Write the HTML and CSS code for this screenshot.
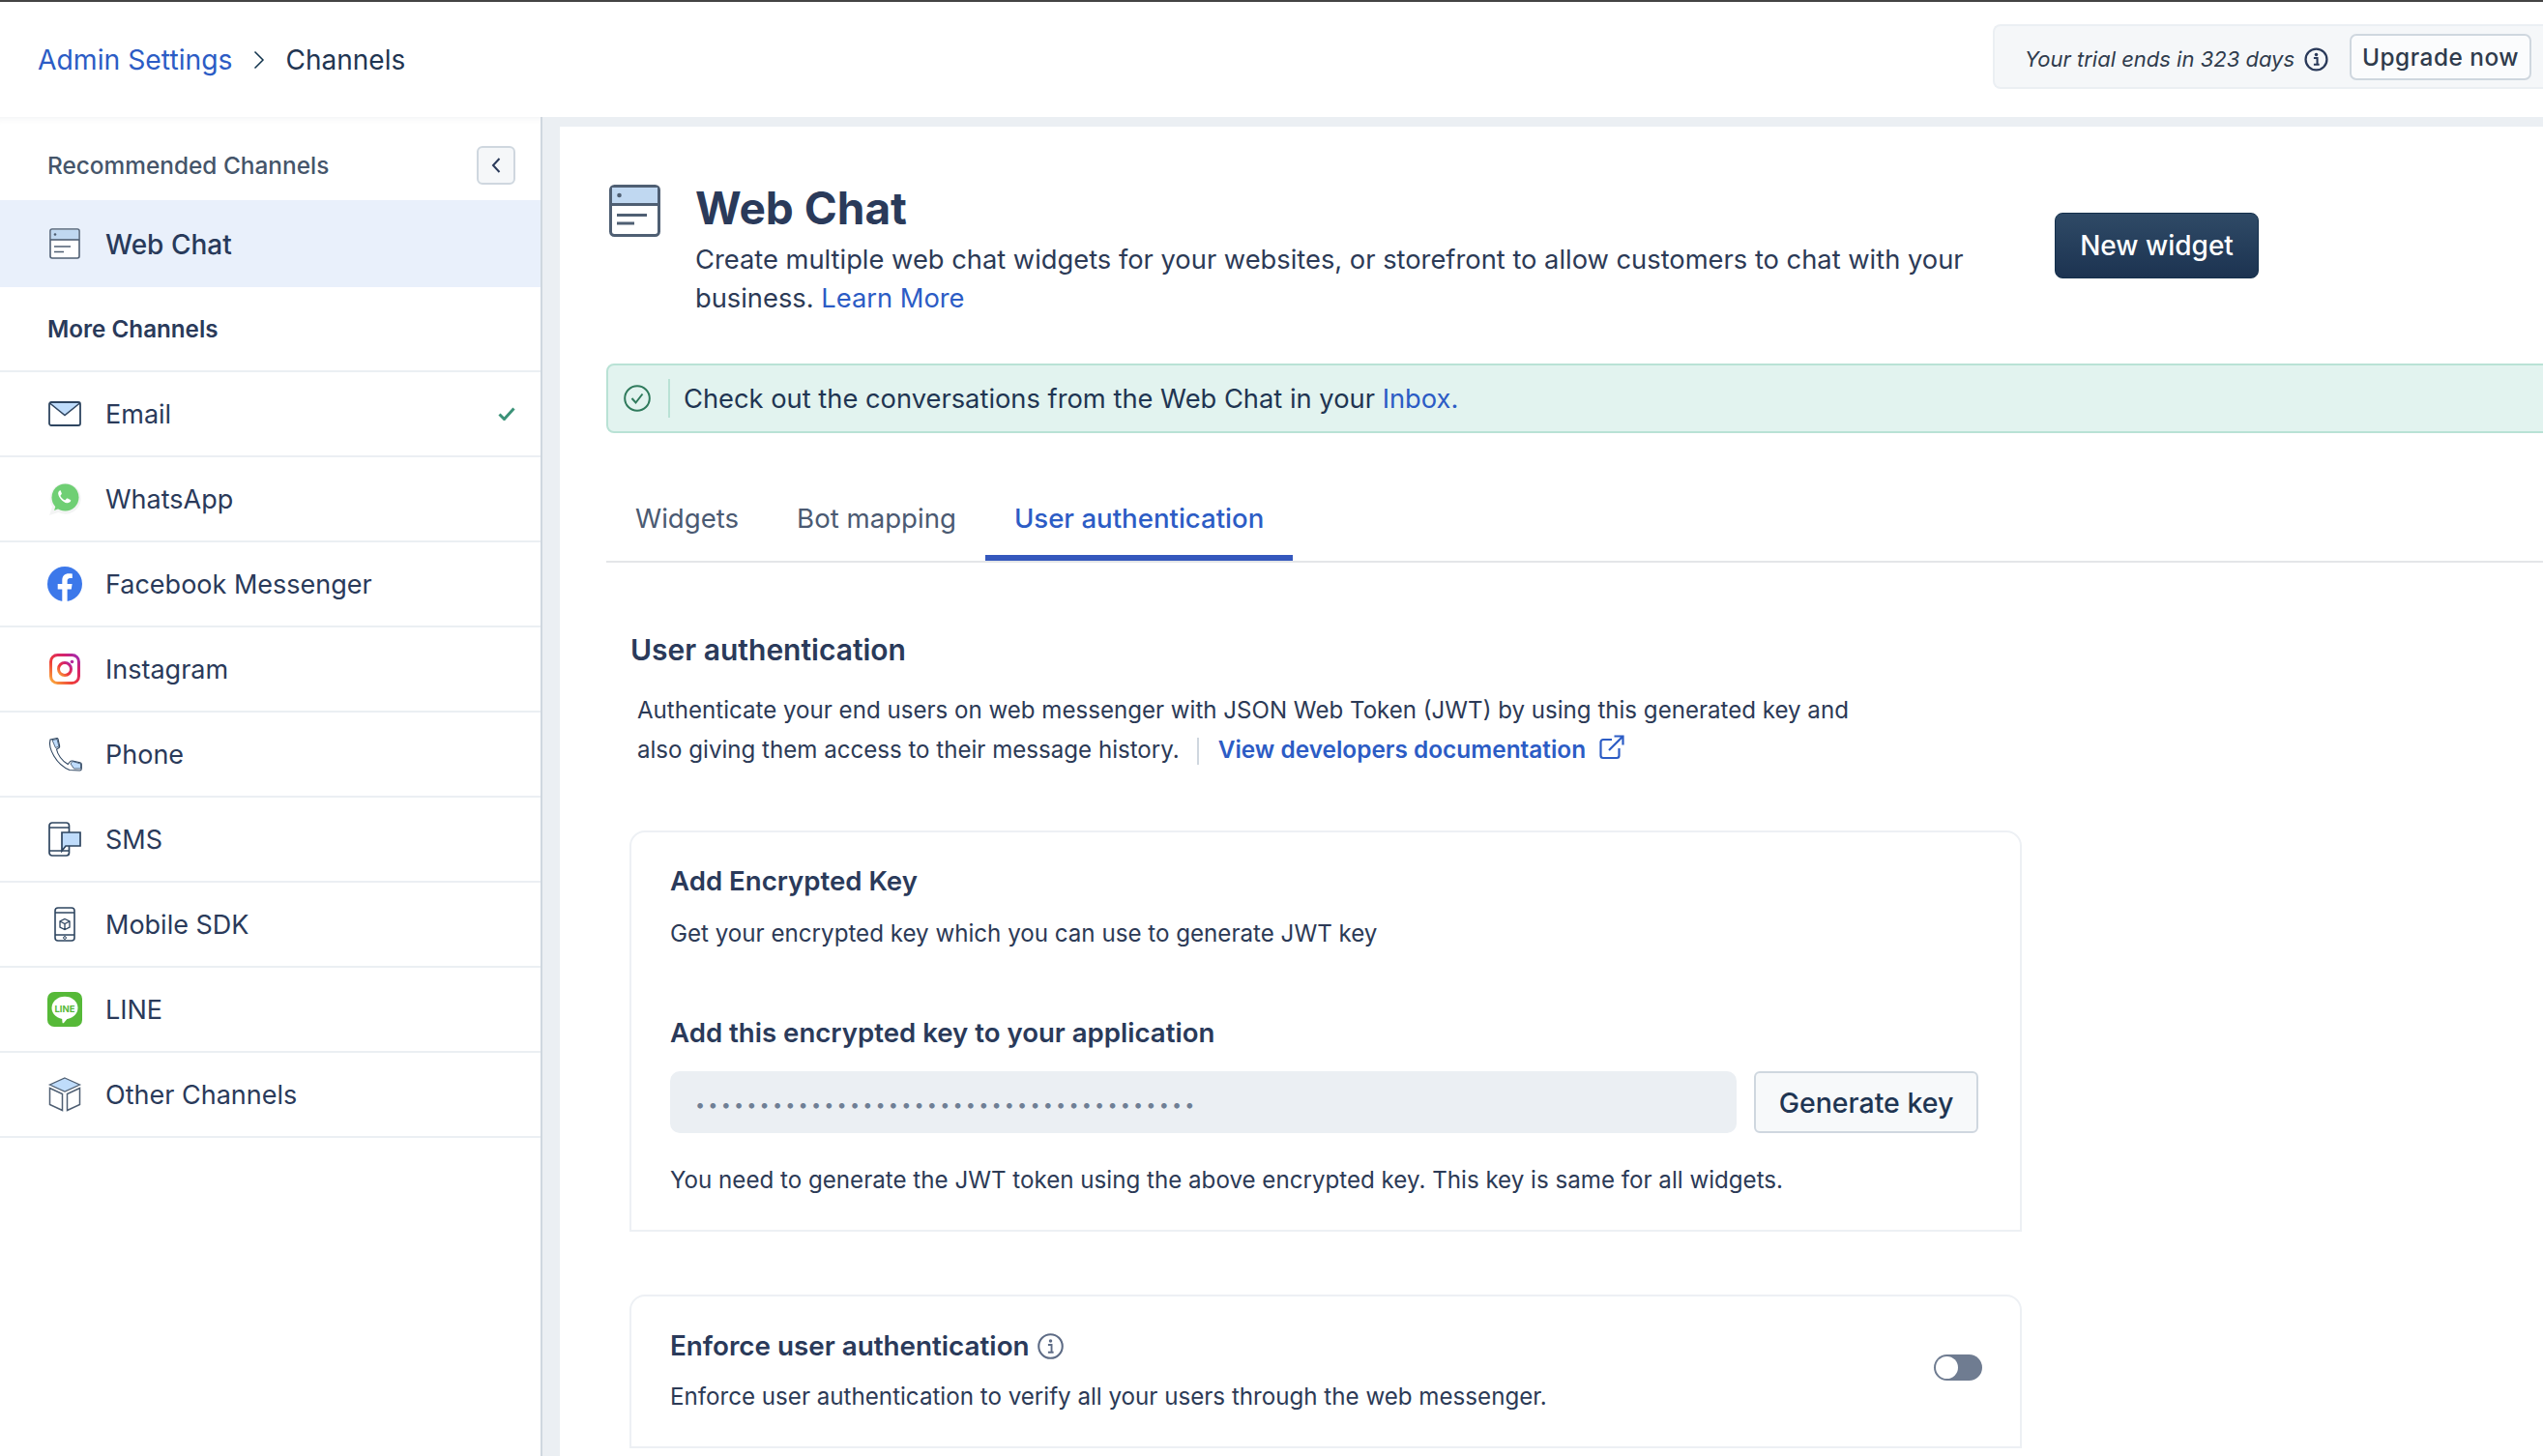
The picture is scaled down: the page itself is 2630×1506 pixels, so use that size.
FILE: index.html
```html
<!DOCTYPE html>
<html lang="en">
<head>
<meta charset="utf-8">
<title>Channels</title>
<link rel="stylesheet" href="styles.css">
</head>
<body>
<svg class="defs" width="0" height="0">
  <defs>
    <linearGradient id="ig" x1="0" y1="1" x2="1" y2="0">
      <stop offset="0" stop-color="#fbb03b"/><stop offset=".4" stop-color="#ee3a3a"/><stop offset=".75" stop-color="#d3226f"/><stop offset="1" stop-color="#9a2bb8"/>
    </linearGradient>
  </defs>
</svg>
<header class="topbar">
  <nav class="crumbs">
    <a class="link">Admin Settings</a>
    <svg class="crumb-sep" viewBox="0 0 12 20"><path d="M1.5 1.5 10 10l-8.500 8.500" fill="none" stroke="#12344d" stroke-width="1.500"/></svg>
    <span class="crumb-current">Channels</span>
  </nav>
  <div class="trial">
    <em class="trial-text">Your trial ends in 323 days</em>
    <svg class="trial-info" viewBox="0 0 24 24"><circle cx="12" cy="12" r="10.500" fill="none" stroke="#2a3a5a" stroke-width="2.200"/><circle cx="12" cy="7.200" r="1.700" fill="#2a3a5a"/><path d="M9.500 10.500H13v6.500h2M9.500 17H15" fill="none" stroke="#2a3a5a" stroke-width="2"/></svg>
    <button class="upgrade">Upgrade now</button>
  </div>
</header>
<div class="body">
  <aside class="sidebar">
    <div class="side-head">
      <span class="side-rec">Recommended Channels</span>
      <button class="collapse"><svg viewBox="0 0 12 18" class="collapse-icon"><path d="M9.500 2 3 9l6.500 7" fill="none" stroke="#2a3a5a" stroke-width="2"/></svg></button>
    </div>
    <div class="row-active">
      <svg class="ic" viewBox="0 0 32 32"><rect x="1" y="1" width="30" height="30" rx="2" fill="#fff" stroke="#4f5f73" stroke-width="1.600"/><path d="M1.800 1.800h28.400v10.200H1.800z" fill="#c0d8f1"/><path d="M1 12h30" stroke="#4f5f73" stroke-width="1.600"/><circle cx="6" cy="6.500" r="1.300" fill="#4f5f73"/><path d="M5 19h17M5 24.500h10" stroke="#4f5f73" stroke-width="1.600"/></svg>
      <span class="active-label">Web Chat</span>
    </div>
    <div class="side-more">More Channels</div>
    <ul class="channels">
      <li class="row">
        <svg class="ic ic-mail" viewBox="0 0 34 26"><path d="M2 2h30L17 14z" fill="#bfdcfb"/><rect x="1" y="1" width="32" height="24" rx="2" fill="none" stroke="#2e4560" stroke-width="1.800"/><path d="M1.500 2 17 14.500 32.500 2" fill="none" stroke="#2e4560" stroke-width="1.600"/></svg>
        <span class="row-label">Email</span>
        <svg class="tick" viewBox="0 0 18 14"><path d="M1.500 7.500 6.500 12.500 16.500 1.500" fill="none" stroke="#3b9278" stroke-width="3"/></svg>
      </li>
      <li class="row">
        <svg class="ic" viewBox="0 0 34 36"><path d="M1 35l3-9A16 16 0 1 1 10.500 32z" fill="#f3f4f4"/><circle cx="17.500" cy="16.500" r="14" fill="#6fcf74"/><path d="M6 30l2.500-7 5 4z" fill="#6fcf74"/><path d="M12.500 9c-1.500.5-2.500 2-2.300 3.700.4 3.600 4.800 8.900 9 9.600 1.900.3 3.400-.7 4-2.200.2-.6 0-1-.4-1.200l-2.900-1.400c-.5-.2-.8-.1-1.100.3l-1 1.200c-.3.300-.6.300-1 .2-1.800-.8-3.300-2.300-4.200-4-.2-.4-.1-.7.200-1l.8-1c.3-.3.300-.6.200-1l-1.200-2.900c-.2-.4-.5-.5-1-.3z" fill="#fff"/></svg>
        <span class="row-label">WhatsApp</span>
      </li>
      <li class="row">
        <svg class="ic" viewBox="0 0 36 36"><circle cx="18" cy="18" r="18" fill="#3c78ea"/><path d="M15.300 36V23.500h-4.600V18h4.600v-3.700c0-4.600 2.700-7.100 6.900-7.100 1.300 0 2.700.2 3.600.4v4.500h-2.300c-2.200 0-2.900 1.400-2.900 2.800V18h5l-.8 5.500h-4.200V36z" fill="#fff"/></svg>
        <span class="row-label">Facebook Messenger</span>
      </li>
      <li class="row">
        <svg class="ic" viewBox="-2 -2 36 36"><rect x="1.500" y="1.500" width="29" height="29" rx="7" fill="none" stroke="url(#ig)" stroke-width="3"/><circle cx="16" cy="16" r="6.500" fill="none" stroke="url(#ig)" stroke-width="3"/><circle cx="23.500" cy="8.500" r="1.800" fill="#b5289c"/></svg>
        <span class="row-label">Instagram</span>
      </li>
      <li class="row">
        <svg class="ic" viewBox="0 0 36 36"><path d="M10 1.500 3 3C.500 12 9 29 23 34.500l10.500.5c1.500 0 1.800-1 1.800-2v-4.500c0-1-.5-1.500-1.500-1.800L26 25c-1.500-.3-2 0-2.800 1l-2 2.500C15 25 10.500 18.500 9.500 13l2.500-1.500c.8-.5.800-1.200.6-2.200L11 2.500c-.1-.6-.5-1-1-1z" fill="#fff" stroke="#2e4560" stroke-width="1.100"/><path d="M5 3.500 10 2.500 12 10 8.500 11.500zM24 28l2-2.500 8.500 2.500v5l-7 0z" fill="#bfdcfb" stroke="#2e4560" stroke-width=".8"/></svg>
        <span class="row-label">Phone</span>
      </li>
      <li class="row">
        <svg class="ic" viewBox="0 0 34 36"><rect x="1" y="1" width="20.500" height="34" rx="3" fill="#fff" stroke="#2e4560" stroke-width="1.700"/><path d="M1 6h20.500M1 30h20.500" stroke="#2e4560" stroke-width="1.400"/><path d="M14 11h19v14H18l-4 5z" fill="#bfdcfb" stroke="#2e4560" stroke-width="1.700"/></svg>
        <span class="row-label">SMS</span>
      </li>
      <li class="row">
        <svg class="ic" viewBox="0 0 32 36"><rect x="6" y="1" width="20" height="34" rx="3" fill="#fff" stroke="#2e4560" stroke-width="1.600"/><path d="M6 6h20M6 29h20" stroke="#2e4560" stroke-width="1.400"/><path d="M16 12.500l5 2.500v6l-5 2.500-5-2.500v-6zM11 15l5 2.500 5-2.500M16 17.500v6" fill="#fff" stroke="#2e4560" stroke-width="1.300"/><circle cx="16" cy="32" r="1.400" fill="none" stroke="#2e4560" stroke-width="1"/></svg>
        <span class="row-label">Mobile SDK</span>
      </li>
      <li class="row">
        <svg class="ic" viewBox="0 0 36 36"><rect width="36" height="36" rx="7" fill="#56b938"/><ellipse cx="18" cy="16.500" rx="13.500" ry="11.800" fill="#fff"/><path d="M15 26h7l-5 6c-.5.500-1.500.500-1.500-.5z" fill="#fff"/><text x="18" y="20.500" text-anchor="middle" class="line-word">LINE</text></svg>
        <span class="row-label">LINE</span>
      </li>
      <li class="row">
        <svg class="ic" viewBox="0 0 34 36"><path d="M17 1 32.500 8 17 15 1.500 8z" fill="#bfdcfb" stroke="#4f5f73" stroke-width="1.300"/><path d="M1.500 11.500 14.500 17.500V34.500L1.500 28.500zM32.500 11.500 19.500 17.500V34.500L32.500 28.500z" fill="#fff" stroke="#4f5f73" stroke-width="1.500"/></svg>
        <span class="row-label">Other Channels</span>
      </li>
    </ul>
  </aside>
  <main class="content">
    <section class="panel">
      <div class="page-head">
        <svg class="head-icon" viewBox="0 0 53 54"><rect x="1.500" y="1.500" width="50" height="51" rx="4" fill="#fff" stroke="#4f5f73" stroke-width="3"/><path d="M3 3h47v17H3z" fill="#c0d8f1"/><path d="M2 20.500h49" stroke="#4f5f73" stroke-width="3"/><circle cx="10.500" cy="11" r="2.300" fill="#4f5f73"/><path d="M8 31.500h31M8 40h18" stroke="#4f5f73" stroke-width="3"/></svg>
        <div class="head-text">
          <h1 class="title">Web Chat</h1>
          <p class="desc">Create multiple web chat widgets for your websites, or storefront to allow customers to chat with your business. <a class="link">Learn More</a></p>
        </div>
        <button class="primary">New widget</button>
      </div>
      <div class="banner">
        <svg class="banner-ic" viewBox="0 0 28 28"><circle cx="14" cy="14" r="12.800" fill="none" stroke="#2f7a5c" stroke-width="2"/><path d="M8.500 14 12.500 18.500 19.500 9.500" fill="none" stroke="#2f7a5c" stroke-width="2"/></svg>
        <span class="banner-sep"></span>
        <span class="banner-text">Check out the conversations from the Web Chat in your <a class="link">Inbox.</a></span>
      </div>
      <div class="tabs">
        <span class="tab">Widgets</span>
        <span class="tab">Bot mapping</span>
        <span class="tab tab-active">User authentication</span>
      </div>
      <div class="section">
        <h2 class="section-title">User authentication</h2>
        <p class="section-desc">Authenticate your end users on web messenger with JSON Web Token (JWT) by using this generated key and<br>also giving them access to their message history.<span class="vsep"></span><a class="link doc-link">View developers documentation</a><svg class="ext" viewBox="0 0 26 26"><path d="M13 5H4a2.500 2.500 0 0 0-2.500 2.500v14A2.500 2.500 0 0 0 4 24h14a2.500 2.500 0 0 0 2.500-2.500V14M10 16 24 2M15.500 1.500H24.500V10.500" fill="none" stroke="#2c5cc5" stroke-width="2.200"/></svg></p>
        <div class="card card-key">
          <h3 class="card-title">Add Encrypted Key</h3>
          <p class="card-text card-sub">Get your encrypted key which you can use to generate JWT key</p>
          <h3 class="card-title card-title-2">Add this encrypted key to your application</h3>
          <div class="key-row">
            <div class="key-input"><span class="dots">•••••••••••••••••••••••••••••••••••••••</span></div>
            <button class="secondary">Generate key</button>
          </div>
          <p class="card-text card-note">You need to generate the JWT token using the above encrypted key. This key is same for all widgets.</p>
        </div>
        <div class="card card-enforce">
          <div class="enforce-text">
            <h3 class="card-title enforce-title">Enforce user authentication<svg class="info" viewBox="0 0 26 26"><circle cx="13" cy="13" r="11.800" fill="none" stroke="#5d6b85" stroke-width="2"/><circle cx="13" cy="7.800" r="1.700" fill="#5d6b85"/><path d="M10.500 11.500H14V19h2M10.500 19H16" fill="none" stroke="#5d6b85" stroke-width="1.800"/></svg></h3>
            <p class="card-text enforce-sub">Enforce user authentication to verify all your users through the web messenger.</p>
          </div>
          <span class="toggle"><span class="knob"></span></span>
        </div>
      </div>
    </section>
  </main>
</div>
</body>
</html>
```
FILE: styles.css
```css
* { box-sizing: border-box; }
html, body { margin: 0; height: 100%; }
body {
  font-family: Inter, "Liberation Sans", sans-serif;
  color: #2a3a5a;
  background: #fff;
  height: 1506px;
  overflow: hidden;
  border-top: 2px solid #444;
}
h1, h2, h3, p, ul { margin: 0; padding: 0; }
ul { list-style: none; }
button { font-family: inherit; cursor: pointer; }
.defs { display: block; height: 0; }
.link { color: #2c5cc5; text-decoration: none; }

.topbar {
  height: 119px;
  display: flex;
  align-items: flex-start;
  justify-content: space-between;
  padding-left: 39px;
}
.crumbs { display: flex; align-items: center; font-size: 28.300px; margin-top: 43px; }
.crumb-sep { width: 12px; height: 20px; margin: 0 22px 0 21px; }
.crumb-current { color: #1f3552; font-size: 28px; }
.trial {
  display: flex;
  align-items: center;
  width: 569px;
  height: 67px;
  margin-top: 23px;
  padding-left: 31px;
  background: #f5f7f9;
  border: 2px solid #ebeff3;
  border-right: 0;
  border-radius: 8px 0 0 8px;
}
.trial-text { font-size: 22px; color: #2f3b4c; width: 289px; white-space: nowrap; margin-top: 5px; }
.trial-info { width: 25px; height: 25px; margin-top: 5px; }
.upgrade {
  margin-left: 22px;
  width: 188px;
  height: 48px;
  background: #fbfcfd;
  border: 2px solid #cfd7df;
  border-radius: 7px;
  font-size: 24.400px;
  font-weight: 500;
  letter-spacing: .5px;
  color: #2f3b4c;
  padding: 0;
}

.body { display: flex; height: 1385px; }
.sidebar {
  width: 561px;
  flex: none;
  border-right: 2px solid #cfd7df;
  box-shadow: inset 0 8px 8px -8px rgba(18, 52, 77, .08);
}
.side-head {
  height: 86px;
  display: flex;
  align-items: center;
  justify-content: space-between;
  padding: 14px 26px 0 49px;
}
.side-rec { font-size: 24.400px; font-weight: 500; color: #45556a; }
.collapse {
  width: 40px;
  height: 40px;
  display: flex;
  align-items: center;
  justify-content: center;
  padding: 0;
  background: #f5f7f9;
  border: 2px solid #cfd7df;
  border-radius: 6px;
}
.collapse-icon { width: 12px; height: 18px; }
.row-active {
  height: 90px;
  display: flex;
  align-items: center;
  padding: 2px 0 0 51px;
  background: #e9f0fb;
}
.row-active .ic { width: 32px; height: 32px; margin: -2px 26px 0 0; }
.active-label { font-size: 28px; font-weight: 500; color: #283a5a; }
.side-more {
  height: 88px;
  display: flex;
  align-items: center;
  padding-left: 49px;
  font-size: 24.200px;
  font-weight: 600;
  border-bottom: 2px solid #ebeff3;
  color: #2a3a5a;
}
.row {
  height: 88px;
  display: flex;
  align-items: center;
  padding-left: 49px;
  border-bottom: 2px solid #ebeff3;
}
.ic { width: 36px; height: 36px; margin-right: 24px; flex: none; }
.ic-mail { width: 34px; height: 26px; margin: 0 25px 0 1px; }
.row-label { font-size: 27px; color: #2a3a5a; }
.tick { width: 18px; height: 14px; margin-left: auto; margin-right: 26px; }
.line-word { font: 700 9.500px Inter, "Liberation Sans", sans-serif; fill: #56b938; }

.content { flex: 1; min-width: 0; background: #ebeff3; padding: 10px 0 0 18px; }
.panel {
  height: 100%;
  background: #fff;
  padding: 60px 0 0 48px;
  overflow: hidden;
}
.page-head { display: flex; width: 1709px; }
.head-icon { width: 53px; height: 54px; flex: none; margin: 0 36px 0 3px; }
.head-text { width: 1350px; flex: none; margin-top: -6px; }
.title { font-size: 46px; font-weight: 700; line-height: 60px; color: #2a3a5a; }
.desc { font-size: 27.300px; line-height: 40px; margin-top: 4px; color: #2c3a56; }
.primary {
  width: 211px;
  height: 68px;
  margin: 29px 0 0 auto;
  background: linear-gradient(#2f4a66, #1c3351);
  border: 1px solid #14304c;
  border-radius: 8px;
  color: #fff;
  font-size: 28px;
  font-weight: 500;
}
.banner {
  display: flex;
  align-items: center;
  height: 72px;
  margin: 47px -20px 0 0;
  padding-left: 16px;
  background: #e2f3ef;
  border: 2px solid #b9e2d5;
  border-radius: 8px;
}
.banner-ic { width: 28px; height: 28px; flex: none; }
.banner-sep { width: 2px; height: 40px; background: #b9e2d5; margin: 0 14px 0 18px; }
.banner-text { font-size: 27.300px; color: #1f3552; }
.tabs {
  display: flex;
  height: 134px;
  padding-top: 58px;
  border-bottom: 2px solid #e4e6e8;
}
.tab {
  display: flex;
  align-items: center;
  height: 74px;
  padding: 0 30px 14px;
  font-size: 27.600px;
  color: #4b5a72;
}
.tab-active {
  color: #2c5cc5;
  font-weight: 500;
  border-bottom: 6px solid #3558bd;
  padding-bottom: 8px;
}
.section { padding: 0 0 0 24px; }
.section-title { font-size: 30px; font-weight: 600; line-height: 40px; margin: 70px 0 0 1px; color: #2a3a5a; }
.section-desc { font-size: 24.100px; line-height: 40px; margin: 23px 0 0 8px; color: #2c3a56; }
.vsep { display: inline-block; width: 2px; height: 28px; background: #cfd7df; margin: 0 20px 0 18px; vertical-align: -7px; }
.doc-link { font-weight: 600; font-size: 24.400px; }
.ext { width: 26px; height: 26px; margin-left: 14px; vertical-align: -2px; }
.card {
  width: 1440px;
  border: 2px solid #edf0f4;
  border-radius: 16px 16px 0 0;
  padding: 0 40px;
}
.card-key { height: 415px; margin-top: 63px; padding-top: 32px; }
.card-title { font-size: 27.600px; font-weight: 600; line-height: 36px; color: #2a3a5a; }
.card-text { font-size: 24.150px; line-height: 36px; color: #2c3a56; }
.card-sub { margin-top: 19px; }
.card-title-2 { margin-top: 66px; }
.key-row { display: flex; align-items: stretch; margin-top: 22px; height: 64px; }
.key-input {
  width: 1103px;
  background: #ebeff3;
  border-radius: 10px;
  display: flex;
  align-items: center;
  padding-left: 26px;
}
.dots { font-size: 18px; letter-spacing: 3.200px; color: #6f7f95; line-height: 1; margin-top: 6px; }
.secondary {
  width: 232px;
  margin-left: 18px;
  background: #f7f9fa;
  border: 2px solid #cfd7df;
  border-radius: 6px;
  font-size: 28.500px;
  font-weight: 500;
  color: #1f3552;
  padding: 0;
}
.card-note { margin-top: 31px; }
.card-enforce {
  height: 159px;
  margin-top: 65px;
  display: flex;
  align-items: center;
  justify-content: space-between;
  padding-right: 39px;
}
.enforce-title { display: flex; align-items: center; font-size: 27.800px; }
.info { width: 27px; height: 27px; margin-left: 8px; }
.enforce-sub { margin-top: 17px; }
.toggle {
  width: 50px;
  height: 27px;
  margin-top: -9px;
  border-radius: 14px;
  background: #6f7c91;
  display: block;
  padding: 2px;
}
.knob { display: block; width: 23px; height: 23px; border-radius: 50%; background: #fff; }
```
